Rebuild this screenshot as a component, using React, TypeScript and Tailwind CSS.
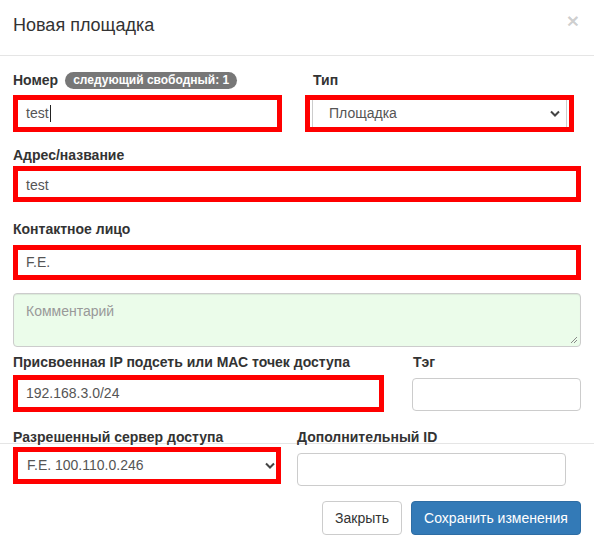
import React from "react";

const font = { fontFamily: '"Liberation Sans", Arial, sans-serif' };

function Chevron() {
  return (
    <svg width="10" height="7" viewBox="0 0 10 7" className="shrink-0">
      <polyline points="1,1.5 5,5.5 9,1.5" fill="none" stroke="#444" strokeWidth="2" />
    </svg>
  );
}

export default function App() {
  return (
    <div className="w-[594px] h-[549px] bg-white text-[#333] overflow-hidden" style={font}>
      {/* header */}
      <div className="h-[56px] border-b border-[#e5e5e5] px-[13px] flex items-start justify-between">
        <h4 className="pt-[13px] text-[18px] leading-[25px] text-[#333]">Новая площадка</h4>
        <span className="mt-[10px] mr-[2px] text-[21px] leading-[21px] font-bold text-black/20">×</span>
      </div>

      <div className="px-[13px]">
        {/* row 1 */}
        <div className="flex mt-[14px]">
          <div className="w-[269px]">
            <div className="flex items-center h-[20px] mb-[5px]">
              <span className="text-[14px] font-bold">Номер</span>
              <span className="ml-[7px] h-[17px] px-[8px] rounded-[10px] bg-[#777] text-white text-[12px] font-bold leading-[17px]">
                следующий свободный: 1
              </span>
            </div>
            <div className="h-[37px] border-[5px] border-[#ff0000] bg-white flex items-center pl-[8px] text-[14px] text-[#555]">
              test<span className="inline-block w-px h-[17px] bg-[#222] ml-[1px]" />
            </div>
          </div>
          <div className="ml-[23px] w-[269px]">
            <div className="h-[20px] mb-[5px] pl-[8px] flex items-center text-[14px] font-bold">Тип</div>
            <div className="h-[37px] border-[5px] border-[#ff0000] bg-white flex">
              <div className="flex-1 ml-[2px] mr-[2px] border-x border-[#ccc] flex items-center justify-between pl-[16px] pr-[6px] text-[14px] text-[#555]">
                <span>Площадка</span>
                <Chevron />
              </div>
            </div>
          </div>
        </div>

        {/* address */}
        <div className="mt-[13px] h-[20px] flex items-center text-[14px] font-bold">Адрес/название</div>
        <div className="mt-[1px] h-[36px] border-[5px] border-[#ff0000] bg-white flex items-center pl-[8px] pt-[2px] text-[14px] text-[#555]">
          test
        </div>

        {/* contact */}
        <div className="mt-[17px] h-[20px] flex items-center text-[14px] font-bold">Контактное лицо</div>
        <div className="mt-[6px] h-[35px] border-[5px] border-[#ff0000] bg-white flex items-center pl-[8px] text-[14px] text-[#555]">
          F.E.
        </div>

        {/* comment */}
        <div className="relative mt-[13px] h-[54px] rounded-[4px] border border-[#ccc] bg-[#ebfcea] px-[12px] pt-[7px] text-[14px] leading-[20px] text-[#999] shadow-[inset_0_1px_1px_rgba(0,0,0,0.075)]">
          Комментарий
          <svg width="8" height="8" viewBox="0 0 8 8" className="absolute right-[2px] bottom-[2px]">
            <line x1="1" y1="7" x2="7" y2="1" stroke="#888" strokeWidth="1" />
            <line x1="4" y1="7" x2="7" y2="4" stroke="#888" strokeWidth="1" />
          </svg>
        </div>

        {/* ip + tag */}
        <div className="flex mt-[5px]">
          <div className="w-[371px]">
            <div className="h-[20px] flex items-center text-[14px] font-bold">Присвоенная IP подсеть или МАС точек доступа</div>
            <div className="mt-[3px] h-[37px] border-[5px] border-[#ff0000] bg-white flex items-center pl-[8px] text-[14px] text-[#555]">
              192.168.3.0/24
            </div>
          </div>
          <div className="ml-[28px] w-[169px]">
            <div className="h-[20px] flex items-center text-[14px] font-bold pl-[1px]">Тэг</div>
            <div className="mt-[6px] h-[33px] rounded-[4px] border border-[#ccc] bg-white" />
          </div>
        </div>
      </div>

      {/* last row overlapping the footer line */}
      <div className="relative mt-[15px]">
        <div className="absolute left-0 right-0 top-[16px] h-px bg-[#e5e5e5]" />
        <div className="relative flex px-[13px]">
          <div className="w-[268px]">
            <div className="h-[20px] flex items-center text-[14px] font-bold">Разрешенный сервер доступа</div>
            <div className="h-[37px] border-[5px] border-[#ff0000] bg-white flex items-center justify-between pl-[9px] pr-[1px] text-[14px] text-[#555]">
              <span>F.E. 100.110.0.246</span>
              <Chevron />
            </div>
          </div>
          <div className="ml-[16px] w-[269px]">
            <div className="h-[20px] flex items-center text-[14px] font-bold">Дополнительный ID</div>
            <div className="mt-[6px] h-[33px] rounded-[4px] border border-[#ccc] bg-white" />
          </div>
        </div>
      </div>

      {/* footer buttons */}
      <div className="flex justify-end gap-[9px] px-[13px] mt-[15px]">
        <button className="h-[34px] w-[80px] rounded-[4px] border border-[#ccc] bg-white text-[14px] text-[#333]">Закрыть</button>
        <button className="h-[34px] w-[170px] rounded-[4px] border border-[#2e6da4] bg-[#337ab7] text-[14px] text-white">Сохранить изменения</button>
      </div>
    </div>
  );
}
